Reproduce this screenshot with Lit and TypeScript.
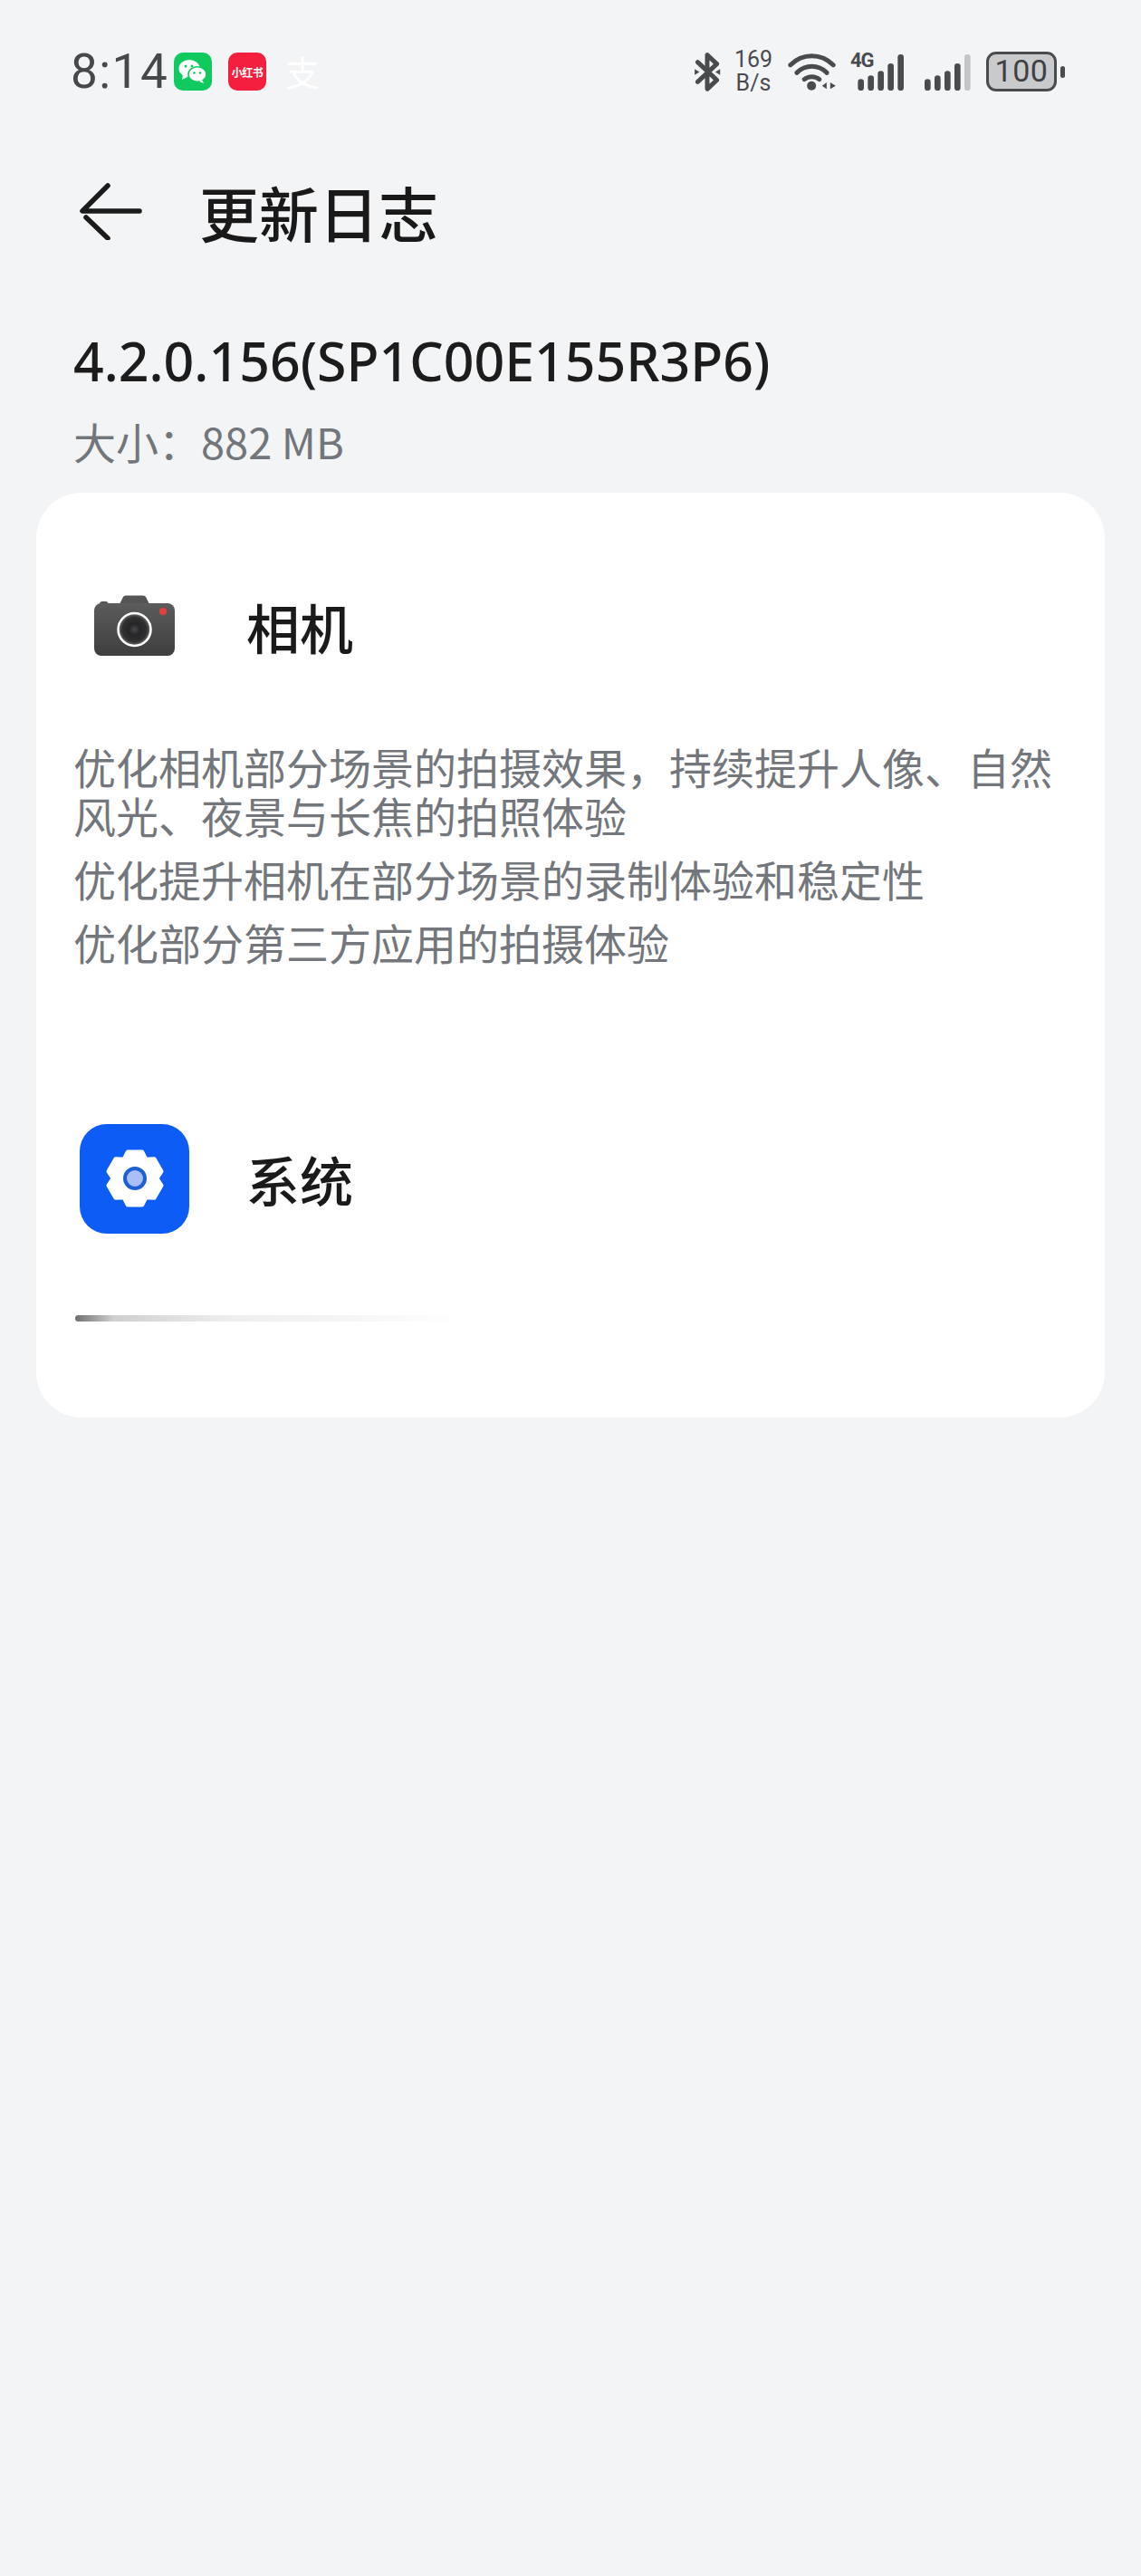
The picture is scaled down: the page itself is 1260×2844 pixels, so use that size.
import { LitElement, html, css, svg } from "lit";
import { customElement } from "lit/decorators.js";

const gearPath = (cx: number, cy: number, rOuter: number, rInner: number, half: number) => {
  const pts: string[] = [];
  for (let i = 0; i < 6; i++) {
    const a = -90 + 60 * i;
    const pt = (deg: number, r: number) =>
      `${(cx + r * Math.cos((deg * Math.PI) / 180)).toFixed(1)} ${(cy + r * Math.sin((deg * Math.PI) / 180)).toFixed(1)}`;
    pts.push(pt(a - half, rOuter), pt(a + half, rOuter), pt(a + 30, rInner));
  }
  return "M" + pts.join("L") + "Z";
};

const bars = (xs: number[], tops: number[], last?: string) =>
  xs.map(
    (x, i) =>
      svg`<rect x=${x - 10} y=${tops[i]} width="20" height=${205 - tops[i]} rx="10" fill=${i === xs.length - 1 && last ? last : "#4a4b4f"}></rect>`
  );

@customElement("app-root")
export class AppRoot extends LitElement {
  static styles = css`
    :host {
      display: block;
      font-family: "Noto Sans CJK SC", "Noto Sans", sans-serif;
    }
    .page {
      width: 1260px;
      min-height: 2844px;
      background: #f3f4f6;
      overflow: hidden;
    }
    .status {
      height: 158px;
      box-sizing: border-box;
      padding: 0 84px 0 78px;
      display: flex;
      align-items: center;
      justify-content: space-between;
    }
    .status-left,
    .status-right {
      display: flex;
      align-items: center;
    }
    .time {
      font-family: "Roboto", sans-serif;
      font-size: 53px;
      line-height: 60px;
      color: #46484c;
      letter-spacing: 1.5px;
      width: 114px;
    }
    .app {
      width: 42px;
      height: 42px;
      border-radius: 10px;
      display: flex;
      align-items: center;
      justify-content: center;
      flex: none;
    }
    .wechat {
      background: #10c95f;
    }
    .redbook {
      background: #f41f3f;
      margin-left: 18px;
      color: #fff;
      font-size: 12px;
      font-weight: 700;
      letter-spacing: -0.5px;
      white-space: nowrap;
    }
    .pay {
      color: #fff;
      font-size: 38px;
      line-height: 42px;
      margin-left: 21px;
    }
    .bt {
      width: 30px;
      height: 43px;
      display: block;
    }
    .speed {
      font-family: "Roboto", sans-serif;
      font-size: 25px;
      line-height: 26px;
      color: #4a4b4f;
      text-align: center;
      margin-left: 14px;
      width: 44px;
    }
    .wifi {
      width: 56px;
      height: 44px;
      margin-left: 16px;
      display: block;
    }
    .cell {
      position: relative;
      width: 60px;
      height: 44px;
      margin-left: 13px;
    }
    .cell svg {
      width: 60px;
      height: 44px;
      display: block;
    }
    .four-g {
      position: absolute;
      left: 0;
      top: -3px;
      font-family: "Roboto", sans-serif;
      font-size: 22px;
      line-height: 26px;
      font-weight: 700;
      color: #4a4b4f;
      letter-spacing: -1px;
    }
    .signal {
      width: 54px;
      height: 44px;
      margin-left: 21px;
      display: block;
    }
    .battery {
      width: 78px;
      height: 44px;
      box-sizing: border-box;
      margin-left: 15px;
      border: 3.5px solid #4a4b4f;
      border-radius: 11px;
      background: #c9cacc;
      color: #3f4044;
      font-family: "Roboto", sans-serif;
      font-size: 34px;
      line-height: 37px;
      text-align: center;
      letter-spacing: 0.5px;
    }
    .nub {
      width: 5px;
      height: 13px;
      border-radius: 2.5px;
      background: #4a4b4f;
      margin-left: 4px;
    }
    .header {
      height: 150px;
      display: flex;
      align-items: center;
      padding-left: 87px;
    }
    .back {
      width: 70px;
      height: 64px;
      display: block;
      flex: none;
    }
    .title {
      margin-left: 63px;
      font-size: 66px;
      font-weight: 500;
      line-height: 80px;
      color: #191919;
    }
    .version {
      margin: 50px 0 0 81px;
      font-family: "Noto Sans", sans-serif;
      font-size: 59px;
      font-weight: 500;
      line-height: 80px;
      color: #1c1c1c;
      white-space: nowrap;
    }
    .size {
      margin: 19px 0 0 81px;
      font-size: 47px;
      line-height: 60px;
      color: #72767b;
      white-space: nowrap;
    }
    .card {
      margin: 27px 40px 0;
      height: 1021px;
      box-sizing: border-box;
      padding: 87px 41px 0;
      background: #fff;
      border-radius: 50px;
    }
    .row {
      display: flex;
      align-items: center;
      padding-left: 7px;
    }
    .row svg {
      width: 121px;
      height: 121px;
      display: block;
      flex: none;
    }
    .row-title {
      margin-left: 63px;
      font-size: 59px;
      font-weight: 500;
      line-height: 80px;
      color: #1a1a1a;
    }
    .notes {
      margin: 67px 0 174px;
      display: flex;
      flex-direction: column;
      gap: 16px;
      font-size: 47px;
      line-height: 54px;
      color: #73777c;
    }
    .bar {
      margin: 90px 0 0 2px;
      width: 422px;
      height: 7px;
      border-radius: 4px;
      background: linear-gradient(90deg, #6f6f6f 0%, #cfcfcf 10%, #eeeeee 40%, #f6f6f6 75%, #ffffff 100%);
    }
  `;

  render() {
    return html`
      <div class="page">
        <div class="status">
          <div class="status-left">
            <div class="time">8:14</div>
            <div class="app wechat">
              <svg width="34" height="30" viewBox="0 0 34 30">
                <ellipse cx="13" cy="11.5" rx="11.5" ry="9.5" fill="#fff"></ellipse>
                <path d="M6 18l-1 6 6-3z" fill="#fff"></path>
                <ellipse cx="22" cy="18" rx="10" ry="8.2" fill="#fff" stroke="#10c95f" stroke-width="1.5"></ellipse>
                <path d="M27 24l2 4-5-2z" fill="#fff"></path>
                <circle cx="9" cy="9" r="1.5" fill="#10c95f"></circle>
                <circle cx="16" cy="9" r="1.5" fill="#10c95f"></circle>
                <circle cx="18.5" cy="16.5" r="1.3" fill="#10c95f"></circle>
                <circle cx="25" cy="16.5" r="1.3" fill="#10c95f"></circle>
              </svg>
            </div>
            <div class="app redbook">小红书</div>
            <div class="pay">支</div>
          </div>
          <div class="status-right">
            <svg class="bt" viewBox="75 80 90 130">
              <path d="M88 178L152 118L120 88V202L152 172L88 112" fill="none" stroke="#4a4b4f" stroke-width="15" stroke-linejoin="round" stroke-linecap="round"></path>
              <path d="M78 135l16 10-16 10zM163 135l-16 10 16 10z" fill="#4a4b4f"></path>
            </svg>
            <div class="speed">169<br />B/s</div>
            <svg class="wifi" viewBox="393 76 165 132">
              <g fill="none" stroke="#4a4b4f" stroke-width="15" stroke-linecap="round">
                <path d="M400 120C440 80 502 80 542 120"></path>
                <path d="M421 146C450 118 492 118 521 146"></path>
                <path d="M446 168C460 156 482 156 496 168"></path>
              </g>
              <circle cx="470" cy="189" r="15" fill="#4a4b4f"></circle>
              <path d="M505 189l15-11v22zM532 178l18 11-18 11z" fill="#4a4b4f"></path>
            </svg>
            <div class="cell">
              <span class="four-g">4G</span>
              <svg viewBox="597 76 180 132">${bars([632, 665, 698, 731, 764], [167, 155, 140, 115, 85])}</svg>
            </div>
            <svg class="signal" viewBox="845 76 162 132">${bars([858, 891, 924, 957, 990], [167, 155, 140, 115, 85], "#c4c5c7")}</svg>
            <div class="battery">100</div>
            <div class="nub"></div>
          </div>
        </div>

        <div class="header">
          <svg class="back" viewBox="87 201 70 64">
            <path d="M119 205L91 233H154M95 240L119 263" fill="none" stroke="#1b1b1b" stroke-width="5.5" stroke-linecap="round" stroke-linejoin="round"></path>
          </svg>
          <div class="title">更新日志</div>
        </div>

        <div class="version">4.2.0.156(SP1C00E155R3P6)</div>
        <div class="size">大小：882 MB</div>

        <div class="card">
          <div class="row">
            <svg viewBox="0 0 121 121">
              <defs>
                <linearGradient id="body" x1="0" y1="0" x2="0" y2="1">
                  <stop offset="0" stop-color="#5c5c5c"></stop>
                  <stop offset="1" stop-color="#3e3e3e"></stop>
                </linearGradient>
                <radialGradient id="lens">
                  <stop offset="0" stop-color="#4a4a48"></stop>
                  <stop offset="0.35" stop-color="#26262a"></stop>
                  <stop offset="0.75" stop-color="#303030"></stop>
                  <stop offset="1" stop-color="#777"></stop>
                </radialGradient>
              </defs>
              <path d="M22 36q0-3 3-3h4q2 0 3 3zM44 36l4-8q1-1.500 3-1.500h19q2 0 3 1.500l4 8z" fill="#555"></path>
              <rect x="16" y="35" width="89" height="58" rx="8" fill="url(#body)"></rect>
              <circle cx="60.500" cy="64" r="18" fill="url(#lens)" stroke="#fff" stroke-width="2.500"></circle>
              <circle cx="92" cy="44" r="4" fill="#e0403f"></circle>
            </svg>
            <div class="row-title">相机</div>
          </div>
          <div class="notes">
            <div>优化相机部分场景的拍摄效果，持续提升人像、自然风光、夜景与长焦的拍照体验</div>
            <div>优化提升相机在部分场景的录制体验和稳定性</div>
            <div>优化部分第三方应用的拍摄体验</div>
          </div>
          <div class="row">
            <svg viewBox="0 0 121 121">
              <rect width="121" height="121" rx="30" fill="#0d5cf6"></rect>
              <path d=${gearPath(61, 60, 30, 24, 15)} fill="#fff" stroke="#fff" stroke-width="5" stroke-linejoin="round"></path>
              <circle cx="61" cy="60" r="11" fill="#a9bff6" stroke="#1e5fd3" stroke-width="4"></circle>
            </svg>
            <div class="row-title">系统</div>
          </div>
          <div class="bar"></div>
        </div>
      </div>
    `;
  }
}
